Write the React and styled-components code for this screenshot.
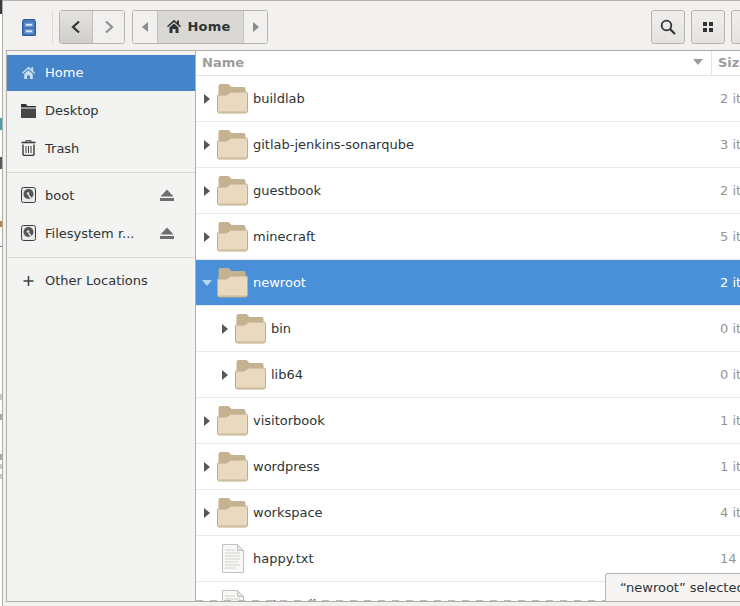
import styled, { createGlobalStyle } from "styled-components";

const GlobalStyle = createGlobalStyle`
  html, body {
    margin: 0;
    height: 100%;
    overflow: hidden;
    background: #fff;
  }
  #root {
    height: 100%;
  }
`;

const Page = styled.div`
  display: flex;
  width: 740px;
  height: 606px;
  overflow: hidden;
  font-family: "DejaVu Sans", sans-serif;
  font-size: 13px;
  color: #2e3436;
`;
const BehindStrip = styled.div`
  flex: 0 0 2px;
  display: flex;
  flex-direction: column;
  background: #fff;
`;
const BehindMark = styled.div`
  width: 2px;
  height: ${(p) => p.$h}px;
  margin-top: ${(p) => p.$top}px;
  background: ${(p) => p.$color};
`;
const Window = styled.div`
  flex: 1;
  min-width: 0;
  display: flex;
  flex-direction: column;
  overflow: hidden;
  border-left: 1px solid #b0aeaa;
  border-top: 1px solid #b6b4b0;
  background: #f2f1f0;
`;
const Toolbar = styled.header`
  flex: 0 0 49px;
  display: flex;
  align-items: flex-start;
  padding: 9px 0 0 19px;
  box-sizing: border-box;
`;
const AppIcon = styled.div`
  display: flex;
  width: 14px;
  margin: 9px 16px 0 0;
`;
const ToolSep = styled.div`
  width: 1px;
  height: 34px;
  background: #dddcd9;
  margin-right: 6px;
`;
const Group = styled.div`
  display: flex;
  height: 34px;
  margin-right: ${(p) => p.$gap ?? 0}px;
  border: 1px solid #b6b4b0;
  border-radius: 3px;
  box-sizing: border-box;
  overflow: hidden;
`;
const GroupBtn = styled.div`
  width: ${(p) => p.$w}px;
  display: flex;
  align-items: center;
  justify-content: center;
  gap: 6px;
  padding: 0 ${(p) => (p.$current ? 5 : 0)}px ${(p) => (p.$current ? 2 : 0)}px 0;
  font-weight: bold;
  letter-spacing: 0.2px;
  color: #2e3436;
  box-sizing: border-box;
  border-left: ${(p) => (p.$first ? "none" : "1px solid #c3c1bd")};
  background: ${(p) =>
    p.$pressed
      ? "linear-gradient(#e4e3e0, #cfcecb)"
      : p.$current
      ? "#d9d8d5"
      : "#f1f0ee"};
`;
const Spacer = styled.div`
  flex: 1;
`;
const ToolBtn = styled.div`
  flex: 0 0 34px;
  height: 34px;
  margin-left: 6px;
  display: flex;
  align-items: center;
  justify-content: center;
  border: 1px solid #b6b4b0;
  border-radius: 3px;
  box-sizing: border-box;
  background: linear-gradient(#f0efed, #e3e2df);
  &:last-child {
    margin-right: -25px;
  }
`;
const Body = styled.div`
  flex: 1;
  min-height: 0;
  display: flex;
  margin: 0 0 4px 3px;
  border: 1px solid #b0aeaa;
  border-width: 1px 0 1px 1px;
`;
const Sidebar = styled.nav`
  flex: 0 0 188px;
  padding-top: 4px;
  background: #f3f3f1;
  border-right: 1px solid #b0aeaa;
`;
const SideRow = styled.div`
  height: ${(p) => p.$h ?? 38}px;
  display: flex;
  align-items: center;
  padding: 0 21px ${(p) => (p.$active ? 2 : 0)}px 14px;
  box-sizing: border-box;
  gap: 9px;
  color: ${(p) => (p.$active ? "#fff" : "#2e3436")};
  background: ${(p) => (p.$active ? "#4584c9" : "transparent")};
`;
const SideLabel = styled.span`
  flex: 1;
  white-space: nowrap;
`;
const SideDivider = styled.div`
  height: 1px;
  margin: 5px 0 3px;
  background: #dad9d6;
`;
const Main = styled.main`
  flex: 1;
  min-width: 0;
  position: relative;
  background: #fff;
  overflow: hidden;
`;
const HeadRow = styled.div`
  height: 24px;
  display: flex;
  border-bottom: 1px solid #e4e3e1;
  font-weight: bold;
  color: #9b9d9c;
`;
const NameHead = styled.div`
  flex: 0 0 516px;
  display: flex;
  align-items: center;
  justify-content: space-between;
  padding: 0 8px 2px 6px;
  box-sizing: border-box;
  border-right: 1px solid #e4e3e1;
`;
const SizeHead = styled.div`
  padding: 0 0 2px 6px;
  display: flex;
  align-items: center;
`;
const Row = styled.div`
  height: 46px;
  display: flex;
  align-items: center;
  box-sizing: border-box;
  border-bottom: 1px solid #e8e8e6;
  background: ${(p) => (p.$selected ? "#4a90d9" : "transparent")};
  color: ${(p) => (p.$selected ? "#fff" : "#2e3436")};
`;
const NameCell = styled.div`
  flex: 0 0 517px;
  display: flex;
  align-items: center;
  padding-left: ${(p) => 8 + p.$depth * 18}px;
  box-sizing: border-box;
`;
const Expander = styled.div`
  flex: 0 0 13px;
  display: flex;
  align-items: center;
`;
const IconSlot = styled.div`
  flex: 0 0 36px;
  display: flex;
  align-items: center;
`;
const FileSlot = styled.span`
  display: flex;
  padding-left: 5px;
`;
const OpenMark = styled.span`
  display: flex;
  margin-left: -2px;
`;
const SizeCell = styled.div`
  padding-left: 7px;
  white-space: nowrap;
  color: ${(p) => (p.$selected ? "#fff" : "#929595")};
`;
const DashedEdge = styled.div`
  position: absolute;
  left: 0;
  right: 0;
  bottom: 0;
  height: 1px;
  background: repeating-linear-gradient(90deg, #bcbcba 0 7px, transparent 7px 14px);
`;
const Toast = styled.div`
  position: absolute;
  left: 409px;
  bottom: 0;
  width: 160px;
  height: 27px;
  padding: 0 14px;
  display: flex;
  align-items: center;
  white-space: nowrap;
  background: #f6f5f4;
  border: 1px solid #b6b4b0;
  border-bottom: none;
  border-radius: 3px 0 0 0;
`;

const HomeIcon = ({ color, size = 15 }) => (
  <svg width={size} height={size} viewBox="0 0 16 16">
    <path
      d="M1 8.2 8 1.8l3 2.700V2.500h2v3.800l2 1.900-1 1.100L8 4 2 9.300z"
      fill={color}
    />
    <path d="M3.500 9.500 8 5.500l4.500 4V15h-3v-4h-3v4h-3z" fill={color} />
  </svg>
);
const DesktopIcon = () => (
  <svg width="15" height="15" viewBox="0 0 15 15">
    <path d="M0 1h5l1.500 2H15v1.500H0z" fill="#2e3436" />
    <path d="M0 5.500h15V15H0z" fill="#454746" />
  </svg>
);
const TrashIcon = () => (
  <svg width="15" height="16" viewBox="0 0 15 16" fill="none" stroke="#3a3d3e">
    <path d="M.5 2.500h14" strokeWidth="1.600" />
    <path d="M5 2V.7h5V2" />
    <path d="M2 4.500v10l1 1h9l1-1v-10" strokeWidth="1.400" />
    <path d="M5 6v7M7.500 6v7M10 6v7" />
  </svg>
);
const DriveIcon = () => (
  <svg width="15" height="16" viewBox="0 0 15 16">
    <rect x="0.5" y="0.5" width="14" height="15" rx="2" fill="#e9e9e7" stroke="#3a3d3e" />
    <circle cx="7.500" cy="7" r="5" fill="#54575a" />
    <circle cx="7" cy="6.500" r="1.300" fill="#e9e9e7" />
    <path d="M7.500 8 11.500 13" stroke="#e9e9e7" strokeWidth="1.400" />
  </svg>
);
const EjectIcon = () => (
  <svg width="14" height="12" viewBox="0 0 14 12">
    <path d="M7 0.500 13.500 7.500H.5z" fill="#6d6f6e" />
    <rect y="9" width="14" height="3" fill="#6d6f6e" />
  </svg>
);
const PlusIcon = () => (
  <svg width="15" height="15" viewBox="0 0 15 15">
    <path d="M7.500 3v10M2.500 8h10" stroke="#3a3d3e" strokeWidth="1.500" />
  </svg>
);
const FolderIcon = () => (
  <svg width="31" height="30" viewBox="0 0 31 30">
    <path d="M1.500 2q0-2 2-2h8l3 3h12q2 0 2 2v6h-27z" fill="#c5b290" />
    <path
      d="M.5 11.500q0-.5.5-.5h8.500l4-3H29q1.500 0 1.500 1.500V27q0 2-2 2h-26q-2 0-2-2z"
      fill="#e9dabf"
      stroke="#c0ac8a"
    />
    <path d="M1.500 28h28" stroke="#c9b695" />
  </svg>
);
const FileIcon = () => (
  <svg width="22" height="29" viewBox="0 0 22 29">
    <path d="M.5.5h15l6 6v22H.5z" fill="#f8f8f7" stroke="#c2c2c0" />
    <path d="M15.500.5v6h6z" fill="#e4e4e2" stroke="#c2c2c0" />
    <path
      d="M3 6h10M3 9h15M3 12h15M3 15h15M3 18h13M3 21h15M3 24h11"
      stroke="#cfcfcd"
    />
  </svg>
);
const SearchIcon = () => (
  <svg width="16" height="16" viewBox="0 0 16 16" fill="none" stroke="#2e3436">
    <circle cx="6.500" cy="6.500" r="4.800" strokeWidth="1.800" />
    <path d="M10 10l5 5" strokeWidth="2.200" />
  </svg>
);
const GridIcon = () => (
  <svg width="10" height="10" viewBox="0 0 10 10" fill="#2e3436">
    <rect width="4" height="4" />
    <rect x="6" width="4" height="4" />
    <rect y="6" width="4" height="4" />
    <rect x="6" y="6" width="4" height="4" />
  </svg>
);
const Chevron = ({ dir, color, w = 2.2 }) => (
  <svg width="16" height="16" viewBox="0 0 16 16" fill="none" stroke={color} strokeWidth={w}>
    <path d={dir === "left" ? "M11 2.500 5 8l6 5.500" : "M5 2.500 11 8l-6 5.500"} />
  </svg>
);
const Arrow = ({ dir }) => (
  <svg width="6" height="10" viewBox="0 0 6 10" fill="#8b8d8c">
    <path d={dir === "left" ? "M6 0v10L0 5z" : "M0 0v10l6-5z"} />
  </svg>
);
const Triangle = ({ open }) =>
  open ? (
    <OpenMark>
      <svg width="10" height="6" viewBox="0 0 10 6" fill="#b9d4f1">
        <path d="M0 0h10L5 6z" />
      </svg>
    </OpenMark>
  ) : (
    <svg width="6" height="10" viewBox="0 0 6 10" fill="#555758">
      <path d="M0 0v10l6-5z" />
    </svg>
  );
const AppCabinet = () => (
  <svg width="14" height="17" viewBox="0 0 14 17">
    <path d="M1.500.5h11l1 2V16q0 .5-.5.5H1q-.5 0-.5-.5V2.500z" fill="#4a7cc4" stroke="#2f5a9c" />
    <rect x="2" y="3" width="10" height="5.500" fill="#6d9ad8" stroke="#34609f" strokeWidth=".6" />
    <rect x="2" y="9.500" width="10" height="5.500" fill="#6d9ad8" stroke="#34609f" strokeWidth=".6" />
    <rect x="4" y="5" width="6" height="1.600" fill="#e4e8ee" />
    <rect x="4" y="11.500" width="6" height="1.600" fill="#e4e8ee" />
  </svg>
);

const entries = [
  { name: "buildlab", size: "2 items" },
  { name: "gitlab-jenkins-sonarqube", size: "3 items" },
  { name: "guestbook", size: "2 items" },
  { name: "minecraft", size: "5 items" },
  { name: "newroot", size: "2 items", open: true, selected: true },
  { name: "bin", size: "0 items", depth: 1 },
  { name: "lib64", size: "0 items", depth: 1 },
  { name: "visitorbook", size: "1 item" },
  { name: "wordpress", size: "1 item" },
  { name: "workspace", size: "4 items" },
  { name: "happy.txt", size: "14 bytes", file: true },
  { name: "test.scroll", size: "20 bytes", file: true },
];

const App = () => (
  <Page>
    <GlobalStyle />
    <BehindStrip>
      <BehindMark $top={0} $h={14} $color="#3a3d3e" />
      <BehindMark $top={104} $h={12} $color="#4aa0b0" />
      <BehindMark $top={27} $h={12} $color="#55585a" />
      <BehindMark $top={52} $h={6} $color="#c08030" />
      <BehindMark $top={19} $h={1} $color="#3a80c0" />
      <BehindMark $top={147} $h={6} $color="#c8c8c8" />
      <BehindMark $top={14} $h={6} $color="#a8a8a8" />
      <BehindMark $top={34} $h={6} $color="#a8a8a8" />
      <BehindMark $top={4} $h={5} $color="#c8c8c8" />
      <BehindMark $top={5} $h={5} $color="#c8c8c8" />
    </BehindStrip>
    <Window>
      <Toolbar>
        <AppIcon>
          <AppCabinet />
        </AppIcon>
        <ToolSep />
        <Group $gap={7}>
          <GroupBtn $w={32} $first $pressed>
            <Chevron dir="left" color="#2e3436" />
          </GroupBtn>
          <GroupBtn $w={32}>
            <Chevron dir="right" color="#8f9190" />
          </GroupBtn>
        </Group>
        <Group>
          <GroupBtn $w={24} $first>
            <Arrow dir="left" />
          </GroupBtn>
          <GroupBtn $w={86} $current>
            <HomeIcon color="#2e3436" size={16} />
            Home
          </GroupBtn>
          <GroupBtn $w={24}>
            <Arrow dir="right" />
          </GroupBtn>
        </Group>
        <Spacer />
        <ToolBtn>
          <SearchIcon />
        </ToolBtn>
        <ToolBtn>
          <GridIcon />
        </ToolBtn>
        <ToolBtn />
      </Toolbar>
      <Body>
        <Sidebar>
          <SideRow $active $h={36}>
            <HomeIcon color="#cfe0f3" />
            <SideLabel>Home</SideLabel>
          </SideRow>
          <SideRow>
            <DesktopIcon />
            <SideLabel>Desktop</SideLabel>
          </SideRow>
          <SideRow>
            <TrashIcon />
            <SideLabel>Trash</SideLabel>
          </SideRow>
          <SideDivider />
          <SideRow>
            <DriveIcon />
            <SideLabel>boot</SideLabel>
            <EjectIcon />
          </SideRow>
          <SideRow>
            <DriveIcon />
            <SideLabel>Filesystem r...</SideLabel>
            <EjectIcon />
          </SideRow>
          <SideDivider />
          <SideRow>
            <PlusIcon />
            <SideLabel>Other Locations</SideLabel>
          </SideRow>
        </Sidebar>
        <Main>
          <HeadRow>
            <NameHead>
              Name
              <svg width="10" height="6" viewBox="0 0 10 6" fill="#9b9d9c">
                <path d="M0 0h10L5 6z" />
              </svg>
            </NameHead>
            <SizeHead>Size</SizeHead>
          </HeadRow>
          {entries.map((e) => (
            <Row key={e.name} $selected={e.selected}>
              <NameCell $depth={e.depth ?? 0}>
                <Expander>{!e.file && <Triangle open={e.open} />}</Expander>
                <IconSlot>
                  {e.file ? (
                    <FileSlot>
                      <FileIcon />
                    </FileSlot>
                  ) : (
                    <FolderIcon />
                  )}
                </IconSlot>
                {e.name}
              </NameCell>
              <SizeCell $selected={e.selected}>{e.size}</SizeCell>
            </Row>
          ))}
          <DashedEdge />
          <Toast>“newroot” selected</Toast>
        </Main>
      </Body>
    </Window>
  </Page>
);

export default App;
